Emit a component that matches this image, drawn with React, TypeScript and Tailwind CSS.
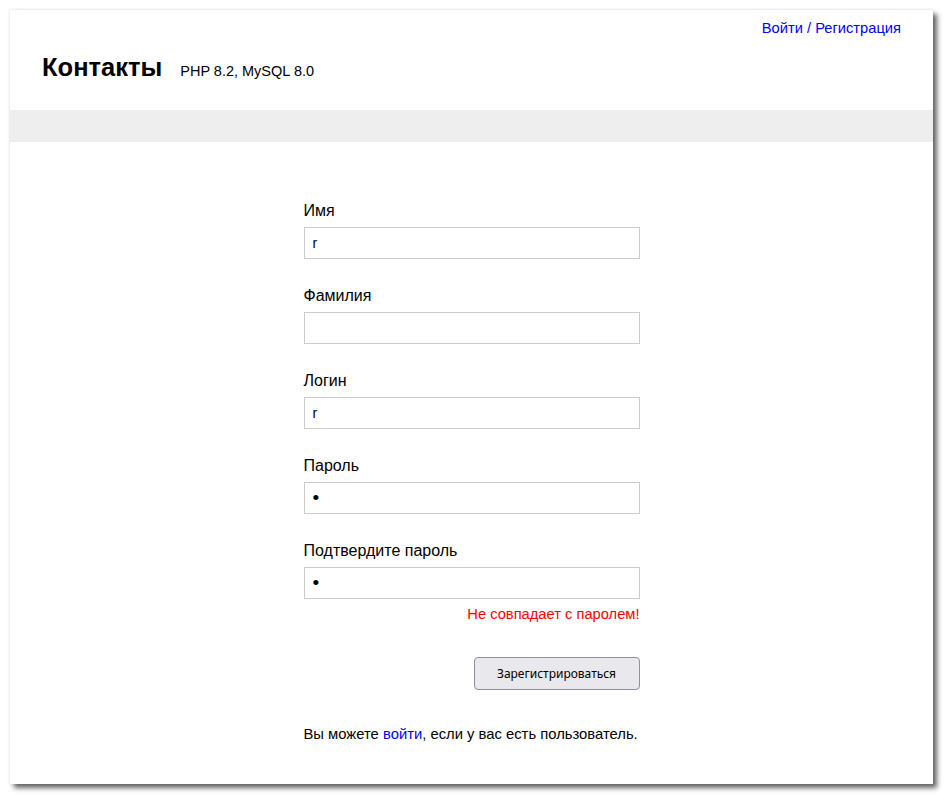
import React from "react";

export default function App() {
  const fields: { label: string; value: string; type: string }[] = [
    { label: "Имя", value: "r", type: "text" },
    { label: "Фамилия", value: "", type: "text" },
    { label: "Логин", value: "r", type: "text" },
    { label: "Пароль", value: "a", type: "password" },
    { label: "Подтвердите пароль", value: "a", type: "password" },
  ];
  return (
    <div
      className="min-h-[795px] w-[944px] bg-white pt-[10px] pl-[10px]"
      style={{ fontFamily: '"Liberation Sans", Arial, sans-serif' }}
    >
      <div className="flex h-[774px] w-[923px] flex-col bg-white text-black shadow-[0_0_3px_rgba(0,0,0,0.12),4px_4px_5px_rgba(0,0,0,0.6)]">
        <header className="flex h-[100px] flex-col">
          <div className="flex justify-end pt-[10px] pr-8 text-[14.7px] leading-4 text-[#0000ff]">
            <a href="#">Войти</a>
            <span className="whitespace-pre text-[#0000ff]"> / </span>
            <a href="#">Регистрация</a>
          </div>
          <div className="mt-[17px] flex items-baseline gap-[18px] pl-8">
            <h1 className="text-[25.5px] leading-7 font-bold">Контакты</h1>
            <span className="text-[14.5px]">PHP 8.2, MySQL 8.0</span>
          </div>
        </header>
        <div className="h-8 bg-[#eeeeee]" />
        <main className="flex justify-center pt-[60px]">
          <form className="flex w-[336px] flex-col" onSubmit={(e) => e.preventDefault()}>
            {fields.map((f, i) => (
              <div key={i} className={i < fields.length - 1 ? "mb-7 flex flex-col" : "flex flex-col"}>
                <label className="mb-[7px] text-base leading-[18px]">{f.label}</label>
                <input
                  type={f.type}
                  defaultValue={f.value}
                  className={
                    f.type === "password"
                      ? "h-8 w-full border border-[#cccccc] bg-white px-2 text-[19px] text-black outline-none"
                      : "h-8 w-full border border-[#cccccc] bg-white px-2 text-sm text-black outline-none"
                  }
                  style={{ fontFamily: '"Liberation Sans", Arial, sans-serif' }}
                />
              </div>
            ))}
            <div className="mt-[7px] text-right text-[14.7px] leading-4 text-[#ff0000]">Не совпадает с паролем!</div>
            <div className="mt-[35px] flex justify-end">
              <button
                type="submit"
                className="h-[33px] w-[166px] rounded-[4px] border border-[#8f8f9d] bg-[#e9e9ed] text-xs text-black"
                style={{ fontFamily: '"Noto Sans", sans-serif' }}
              >
                Зарегистрироваться
              </button>
            </div>
            <p className="mt-9 text-[14.8px] leading-4">
              Вы можете <a href="#" className="text-[#0000ff]">войти</a>, если у вас есть пользователь.
            </p>
          </form>
        </main>
      </div>
    </div>
  );
}
